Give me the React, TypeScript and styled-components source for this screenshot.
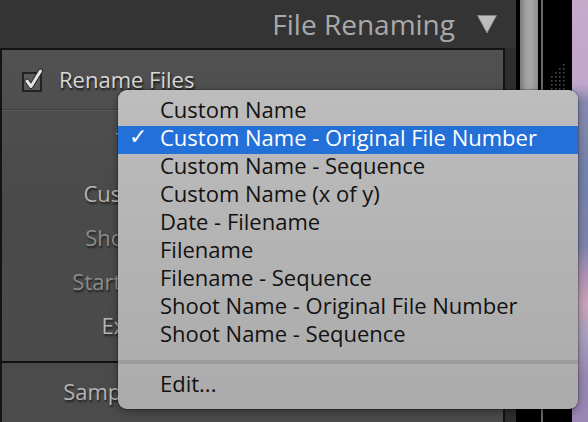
import React from "react";
import styled, { createGlobalStyle } from "styled-components";

const Global = createGlobalStyle`
  html, body { margin: 0; padding: 0; background: #000; }
  body {
    width: 588px; height: 422px; overflow: hidden;
    font-family: "Open Sans", "Noto Sans", sans-serif;
  }
`;

const Screen = styled.div`
  position: relative;
  width: 588px;
  height: 422px;
  display: flex;
  overflow: hidden;
  background: #000;
`;

const Sidebar = styled.div`
  width: 516px;
  flex: none;
  display: flex;
  flex-direction: column;
  background: #2e2e2e;
`;

const Header = styled.div`
  height: 48px;
  flex: none;
  display: flex;
  align-items: center;
  justify-content: flex-end;
  gap: 22px;
  padding-right: 19px;
  background: #343434;
`;

const Title = styled.div`
  font-size: 28px;
  line-height: 48px;
  color: #a9a9a9;
`;

const Panel = styled.div`
  width: 505px;
  flex: 1;
  box-sizing: border-box;
  border: 2px solid #141414;
  border-bottom: none;
  display: flex;
  flex-direction: column;
  background: linear-gradient(#515151, #4a4a4a 40%, #4b4b4b);
`;

const RenameRow = styled.div`
  height: 59px;
  flex: none;
  display: flex;
  align-items: center;
  gap: 13px;
  padding-left: 18px;
  border-bottom: 1px solid #3e3e3e;
  box-shadow: 0 1px 0 #585858;
`;

const CheckLabel = styled.span`
  font-size: 22px;
  color: #d6d6d6;
  padding-bottom: 2px;
  text-shadow: 1px 2px 2px rgba(0, 0, 0, 0.75);
`;

const Fields = styled.div`
  display: flex;
  flex-direction: column;
  padding: 8px 0 14px;
  border-bottom: 2px solid #111;
`;

const FieldRow = styled.div<{ $after?: number }>`
  height: 44px;
  display: grid;
  grid-template-columns: 216px 1fr;
  align-items: center;
  column-gap: 10px;
  margin-bottom: ${(p) => p.$after ?? 0}px;
`;

const Label = styled.span<{ $dim?: boolean }>`
  font-size: 22px;
  text-align: right;
  white-space: nowrap;
  color: ${(p) => (p.$dim ? "#8b8b8b" : "#b4b4b4")};
  text-shadow: 1px 2px 2px rgba(0, 0, 0, 0.6);
`;

const Field = styled.span`
  height: 26px;
  margin-right: 14px;
  border-radius: 3px;
  background: #5c5c5c;
`;

const SampleSection = styled.div`
  padding-top: 6px;
  display: flex;
  flex-direction: column;
`;

const SampleRow = styled.div`
  height: 44px;
  display: grid;
  grid-template-columns: 143px 1fr;
  column-gap: 10px;
  align-items: center;
`;

const BlackBar = styled.div<{ $w: number }>`
  width: ${(p) => p.$w}px;
  flex: none;
  background: #000;
  position: relative;
`;

const Track = styled.div`
  width: 18px;
  flex: none;
  background: #000;
  display: flex;
  flex-direction: column;
`;

const Thumb = styled.div`
  height: 300px;
  border-radius: 0 0 6px 6px;
  background: linear-gradient(90deg, #7c7c7c, #a2a2a2 35%, #a9a9a9 60%, #8e8e8e);
`;

const Rule = styled.div`
  width: 2px;
  flex: none;
  background: #6a6a6a;
`;

const Grip = styled.svg`
  position: absolute;
  left: 6px;
  top: 62px;
`;

const Photo = styled.div`
  flex: 1;
  background: linear-gradient(
    #c7a9cc 0%,
    #c1a5ca 20%,
    #8a8bb2 24%,
    #7681aa 40%,
    #7d83ab 58%,
    #a890b2 64%,
    #c8a4bb 72%,
    #a99fbc 80%,
    #9687b0 90%,
    #9a86b3 100%
  );
`;

const Menu = styled.div`
  position: absolute;
  left: 118px;
  top: 90px;
  width: 460px;
  height: 319px;
  box-sizing: border-box;
  padding: 8px 0 9px;
  border-radius: 9px;
  background: linear-gradient(#bdbdbd, #b3b3b3 50%, #ababab);
  box-shadow: 0 0 0 1px rgba(0, 0, 0, 0.2), 0 3px 8px rgba(0, 0, 0, 0.35);
  display: flex;
  flex-direction: column;
`;

const Item = styled.div<{ $active?: boolean }>`
  height: 28px;
  box-sizing: border-box;
  padding: 0 0 6px 42px;
  display: flex;
  align-items: center;
  position: relative;
  font-size: 22px;
  white-space: nowrap;
  color: ${(p) => (p.$active ? "#ffffff" : "#121212")};
  background: ${(p) => (p.$active ? "#2370d9" : "transparent")};
`;

const Tick = styled.span`
  position: absolute;
  left: 11px;
  top: -3px;
  line-height: 28px;
  font-family: "DejaVu Sans", sans-serif;
  font-size: 22px;
  color: #fff;
`;

const Separator = styled.div`
  height: 4px;
  margin: 10px 0 8px;
  background: #9c9c9c;
`;

const items = [
  "Custom Name",
  "Custom Name - Original File Number",
  "Custom Name - Sequence",
  "Custom Name (x of y)",
  "Date - Filename",
  "Filename",
  "Filename - Sequence",
  "Shoot Name - Original File Number",
  "Shoot Name - Sequence",
];

function CheckBox() {
  return (
    <svg width="26" height="26" viewBox="0 0 26 26">
      <rect x="3" y="6" width="18" height="18" fill="#5a5a5a" stroke="#222" strokeWidth="2" />
      <path d="M7 14 L11 19.5 L20.5 4" fill="none" stroke="#2a2a2a" strokeWidth="5" strokeLinecap="round" strokeLinejoin="round" />
      <path d="M7 14 L11 19.5 L20.5 4" fill="none" stroke="#e4e4e4" strokeWidth="3" strokeLinecap="round" strokeLinejoin="round" />
    </svg>
  );
}

function Triangle() {
  return (
    <svg width="20" height="20" viewBox="0 0 20 20">
      <path d="M0.5 1.5 H19.5 L10 19 Z" fill="#bcbcbc" stroke="#8a8a8a" strokeWidth="0.8" />
    </svg>
  );
}

function GripDots() {
  const dots: React.ReactElement[] = [];
  for (let c = 0; c < 4; c++) {
    const x = 14 - c * 4;
    for (let y = 2 + c * 4; y <= 26; y += 4) {
      dots.push(<rect key={`${c}-${y}`} x={x} y={y} width="1.6" height="1.6" fill="#4a4a4a" />);
    }
  }
  return (
    <Grip width="18" height="30" viewBox="0 0 18 30">
      {dots}
    </Grip>
  );
}

export default function App() {
  return (
    <Screen>
      <Global />
      <Sidebar>
        <Header>
          <Title>File Renaming</Title>
          <Triangle />
        </Header>
        <Panel>
          <RenameRow>
            <CheckBox />
            <CheckLabel>Rename Files</CheckLabel>
          </RenameRow>
          <Fields>
            <FieldRow $after={9}>
              <Label>Template:</Label>
              <Field />
            </FieldRow>
            <FieldRow>
              <Label>Custom Text:</Label>
              <Field />
            </FieldRow>
            <FieldRow>
              <Label $dim>Shoot Name:</Label>
              <Field />
            </FieldRow>
            <FieldRow>
              <Label $dim>Start Number:</Label>
              <Field />
            </FieldRow>
            <FieldRow>
              <Label>Extensions:</Label>
              <Field />
            </FieldRow>
          </Fields>
          <SampleSection>
            <SampleRow>
              <Label>Sample:</Label>
              <Field />
            </SampleRow>
          </SampleSection>
        </Panel>
      </Sidebar>
      <BlackBar $w={4} />
      <Track>
        <Thumb />
      </Track>
      <BlackBar $w={3} />
      <Rule />
      <BlackBar $w={29}>
        <GripDots />
      </BlackBar>
      <Photo />
      <Menu>
        {items.map((t, i) => (
          <Item key={t} $active={i === 1}>
            {i === 1 && <Tick>✓</Tick>}
            {t}
          </Item>
        ))}
        <Separator />
        <Item>Edit...</Item>
      </Menu>
    </Screen>
  );
}
